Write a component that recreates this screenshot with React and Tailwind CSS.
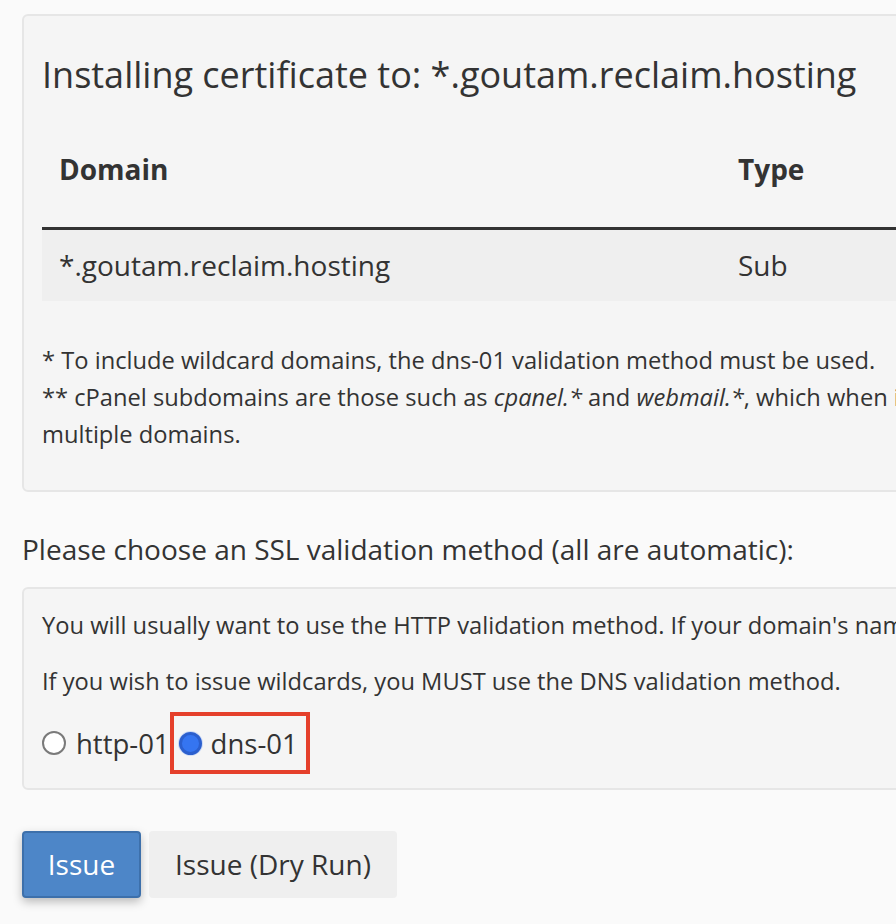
export default function App() {

    const rows = [
        {
            domain: '*.goutam.reclaim.hosting',
            type: 'Sub'
        }
    ]

    return (

        <div className="min-h-[924px] w-[896px] overflow-hidden bg-[#fafafa] pl-[22px] pt-[14px] font-['Open_Sans',sans-serif] text-[28px] leading-[37px] text-[#333333]">

            {/* CERTIFICATE PANEL */}
            <div className="w-[1100px] rounded-[6px] border-2 border-[#e6e6e6] bg-[#f5f5f5] px-[18px] pt-[37px] pb-[37px]">

                <h3 className="text-[36px] leading-[44px] whitespace-nowrap">
                    Installing certificate to: *.goutam.reclaim.hosting
                </h3>

                <div className="mt-[40px] grid grid-cols-[679px_1fr]">

                    <div className="px-[17px] pt-[14px] pb-[39px] font-bold border-b-[3px] border-[#333333]">
                        Domain
                    </div>

                    <div className="px-[17px] pt-[14px] pb-[39px] font-bold border-b-[3px] border-[#333333]">
                        Type
                    </div>

                    {rows.map(row => (
                        <div key={row.domain} className="contents">

                            <div className="bg-[#efefef] px-[17px] pt-[17px] pb-[17px]">
                                {row.domain}
                            </div>

                            <div className="bg-[#efefef] px-[17px] pt-[17px] pb-[17px]">
                                {row.type}
                            </div>

                        </div>
                    ))}

                </div>

                <p className="mt-[41px] text-[23.7px] whitespace-nowrap">
                    * To include wildcard domains, the dns-01 validation method must be used.
                    <br />
                    ** cPanel subdomains are those such as <i>cpanel.*</i> and <i>webmail.*</i>, which when included, will secure services across
                    <br />
                    multiple domains.
                </p>

            </div>

            {/* VALIDATION METHOD */}
            <p className="mt-[39px] mb-[19px] whitespace-nowrap">
                Please choose an SSL validation method (all are automatic):
            </p>

            <div className="w-[1100px] rounded-[6px] border-2 border-[#e6e6e6] bg-[#f5f5f5] px-[18px] pt-[18px] pb-[14px] whitespace-nowrap">

                <p className="text-[23.7px]">
                    You will usually want to use the HTTP validation method. If your domain's name servers are elsewhere, use DNS.
                </p>

                <p className="mt-[19px] text-[23.7px]">
                    If you wish to issue wildcards, you MUST use the DNS validation method.
                </p>

                <div className="mt-[12px] flex items-center text-[27.5px]">

                    <label className="flex items-center gap-[10px]">
                        <span className="h-[24px] w-[24px] rounded-full border-2 border-[#7a7a7a] bg-white"></span>
                        http-01
                    </label>

                    <label className="flex h-[62px] items-center gap-[9px] border-4 border-[#e5402b] pl-[5px] pr-[8px]">
                        <span className="h-[23px] w-[23px] rounded-full border-[3px] border-[#2b5fce] bg-[#3575f1] shadow-[0_0_0_1px_#cddbf6]"></span>
                        dns-01
                    </label>

                </div>

            </div>

            {/* ACTIONS */}
            <div className="mt-[41px] flex gap-[8px]">

                <button className="h-[67px] w-[119px] rounded-[4px] border-2 border-[#3d70ab] bg-[#4d86c8] text-white shadow-[0_4px_10px_rgba(0,0,0,0.25)]">
                    Issue
                </button>

                <button className="h-[67px] w-[248px] rounded-[4px] bg-[#efefef] text-[#333333]">
                    Issue (Dry Run)
                </button>

            </div>

        </div>
    )
}
